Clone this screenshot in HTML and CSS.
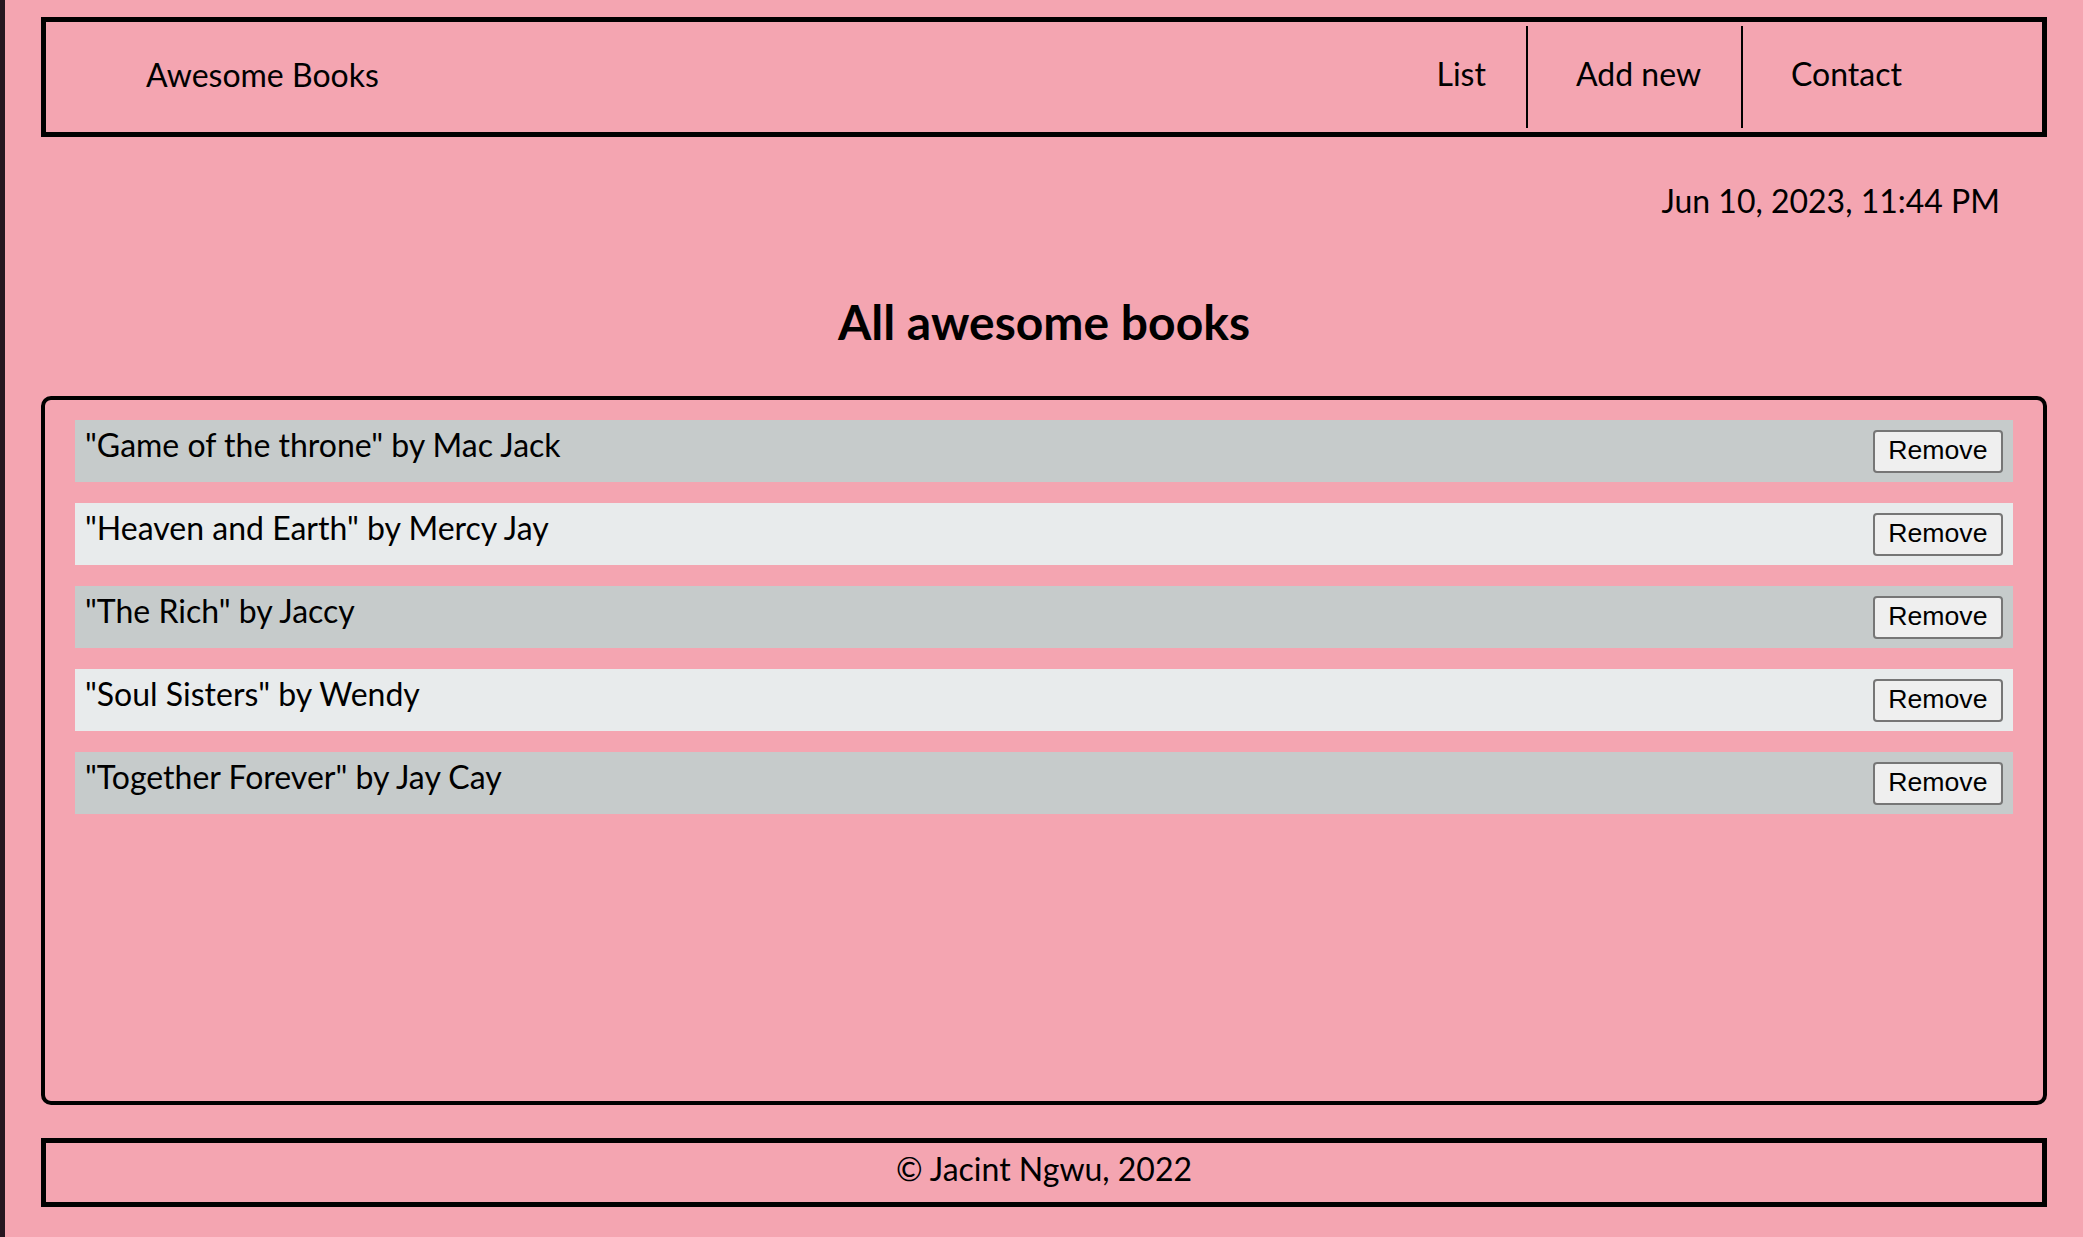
FILE: index.html
```html
<!DOCTYPE html>
<html lang="en">
<head>
<meta charset="UTF-8">
<title>Awesome Books</title>
<link rel="stylesheet" href="styles.css">
</head>
<body>
<div class="page">
  <header class="header">
    <div class="logo">Awesome Books</div>
    <ul class="nav">
      <li>List</li>
      <li>Add new</li>
      <li>Contact</li>
    </ul>
  </header>
  <p class="date">Jun 10, 2023, 11:44 PM</p>
  <h1 class="title">All awesome books</h1>
  <section class="books">
    <div class="book"><span class="book-title">"Game of the throne" by Mac Jack</span><button class="remove">Remove</button></div>
    <div class="book"><span class="book-title">"Heaven and Earth" by Mercy Jay</span><button class="remove">Remove</button></div>
    <div class="book"><span class="book-title">"The Rich" by Jaccy</span><button class="remove">Remove</button></div>
    <div class="book"><span class="book-title">"Soul Sisters" by Wendy</span><button class="remove">Remove</button></div>
    <div class="book"><span class="book-title">"Together Forever" by Jay Cay</span><button class="remove">Remove</button></div>
  </section>
  <footer class="footer">© Jacint Ngwu, 2022</footer>
</div>
</body>
</html>
```
FILE: styles.css
```css
html, body {
  margin: 0;
  padding: 0;
}

body {
  background: #f4a5b1;
  border-left: 5px solid #261620;
  min-height: 100vh;
  box-sizing: border-box;
  font-family: Lato, "Open Sans", sans-serif;
  color: #000;
}

.page {
  padding: 17px 36px 30px;
}

.header {
  display: flex;
  justify-content: space-between;
  align-items: center;
  height: 120px;
  box-sizing: border-box;
  border: 5px solid #000;
  padding: 0 100px;
}

.logo {
  font-size: 32px;
  line-height: 38.4px;
  padding-bottom: 4px;
}

.nav {
  display: flex;
  list-style: none;
  margin: 0;
  padding: 0;
}

.nav li {
  font-size: 32px;
  line-height: 38.4px;
  padding: 29px 40px 34px 48px;
}

.nav li:not(:last-child) {
  border-right: 2px solid #000;
}

.date {
  margin: 45px 0 0;
  padding-right: 47px;
  text-align: right;
  font-size: 32px;
  line-height: 38.4px;
}

.title {
  margin: 73px 0 45px;
  text-align: center;
  font-size: 48px;
  line-height: 57.6px;
  font-weight: 700;
}

.books {
  height: 709px;
  box-sizing: border-box;
  border: 4px solid #000;
  border-radius: 10px;
  padding: 20px 30px;
  display: flex;
  flex-direction: column;
  gap: 20.6px;
}

.book {
  display: flex;
  justify-content: space-between;
  align-items: center;
  height: 62.4px;
  flex: none;
  box-sizing: border-box;
  padding: 0 10px;
  font-size: 32px;
}

.book:nth-child(odd) {
  background: #c6cbcb;
}

.book:nth-child(even) {
  background: #e8ebec;
}

.book-title {
  align-self: flex-start;
  margin-top: 5.8px;
  line-height: 38.4px;
}

.remove {
  font-family: "Liberation Sans", Arial, sans-serif;
  font-size: 26.67px;
  padding: 3px 13.5px 5px;
  border: 2px solid #767676;
  border-radius: 4px;
  background: #efefef;
  color: #000;
}

.footer {
  margin-top: 33px;
  height: 69.4px;
  box-sizing: border-box;
  border: 5px solid #000;
  display: flex;
  align-items: center;
  justify-content: center;
  padding-bottom: 7px;
  font-size: 32px;
  line-height: 38.4px;
}
```
